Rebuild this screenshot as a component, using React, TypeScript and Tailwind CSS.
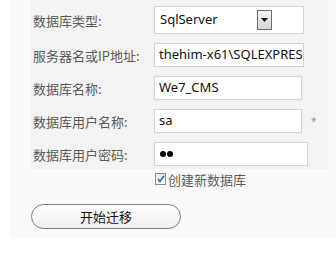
import React from "react";

const labelCls =
  "w-[121px] shrink-0 text-[13px] leading-none text-[#5a5a5a] [font-family:'Noto_Sans_CJK_SC','Noto_Sans',sans-serif]";
const inputCls =
  "h-[24px] bg-white border border-[#d4d4d4] flex items-center pl-[4px] overflow-hidden whitespace-nowrap text-[13px] text-[#111] [font-family:'Noto_Sans','Noto_Sans_CJK_SC',sans-serif]";

export default function App() {
  return (
    <div className="w-[336px] h-[259px] bg-white overflow-hidden">
      <div className="ml-[10px] w-[326px] h-[238px] bg-[#fafafa] pl-[21px]">
        <div className="w-[297px] h-[169px] bg-[#f3f3f3] pt-[6px] pl-[2px] flex flex-col">
          <div className="flex items-center h-[28px]">
            <div className={labelCls}>数据库类型:</div>
            <div className="w-[150px] h-[28px] bg-white border border-[#d4d4d4] flex items-center justify-between pl-[5px] pr-[31px] text-[13px] text-[#111] [font-family:'Noto_Sans',sans-serif]">
              <span>SqlServer</span>
              <div className="w-[15px] h-[20px] border border-[#6e6e6e] bg-gradient-to-b from-[#f4f4f4] to-[#d6d6d6] flex items-center justify-center">
                <svg width="7" height="4" viewBox="0 0 7 4">
                  <path d="M0 0 L7 0 L3.5 4 Z" fill="#000" />
                </svg>
              </div>
            </div>
          </div>
          <div className="flex items-center h-[24px] mt-[9px]">
            <div className={labelCls}>服务器名或IP地址:</div>
            <div className={inputCls + " w-[150px]"}>thehim-x61\SQLEXPRESS</div>
          </div>
          <div className="flex items-center h-[24px] mt-[9px]">
            <div className={labelCls}>数据库名称:</div>
            <div className={inputCls + " w-[148px]"}>We7_CMS</div>
          </div>
          <div className="flex items-center h-[24px] mt-[9px]">
            <div className={labelCls}>数据库用户名称:</div>
            <div className={inputCls + " w-[148px]"}>sa</div>
            <span className="ml-[9px] text-[10px] text-[#999] [font-family:'Noto_Sans',sans-serif]">*</span>
          </div>
          <div className="flex items-center h-[24px] mt-[9px]">
            <div className={labelCls}>数据库用户密码:</div>
            <div className={inputCls + " w-[154px] gap-[1px]"}>
              <span className="w-[6px] h-[6px] rounded-full bg-black ml-[1px]" />
              <span className="w-[6px] h-[6px] rounded-full bg-black" />
            </div>
          </div>
        </div>
        <div className="flex items-center mt-[4px] ml-[124px] h-[12px]">
          <div className="w-[11px] h-[12px] border border-[#8a8a8a] bg-gradient-to-b from-[#e9e9e9] to-[#ffffff] flex items-center justify-center">
            <svg width="8" height="8" viewBox="0 0 8 8">
              <path d="M1 4 L3 6.5 L7 0.8" stroke="#3b5fa8" strokeWidth="1.6" fill="none" />
            </svg>
          </div>
          <span className="ml-[2px] text-[13px] text-[#5a5a5a] leading-none [font-family:'Noto_Sans_CJK_SC',sans-serif]">
            创建新数据库
          </span>
        </div>
        <div className="mt-[19px] w-[150px] h-[25px] rounded-full border border-[#7c7c7c] bg-gradient-to-b from-white to-[#efefef] flex items-center justify-center text-[13px] text-[#111] [font-family:'Noto_Sans_CJK_SC',sans-serif]">
          开始迁移
        </div>
      </div>
    </div>
  );
}
